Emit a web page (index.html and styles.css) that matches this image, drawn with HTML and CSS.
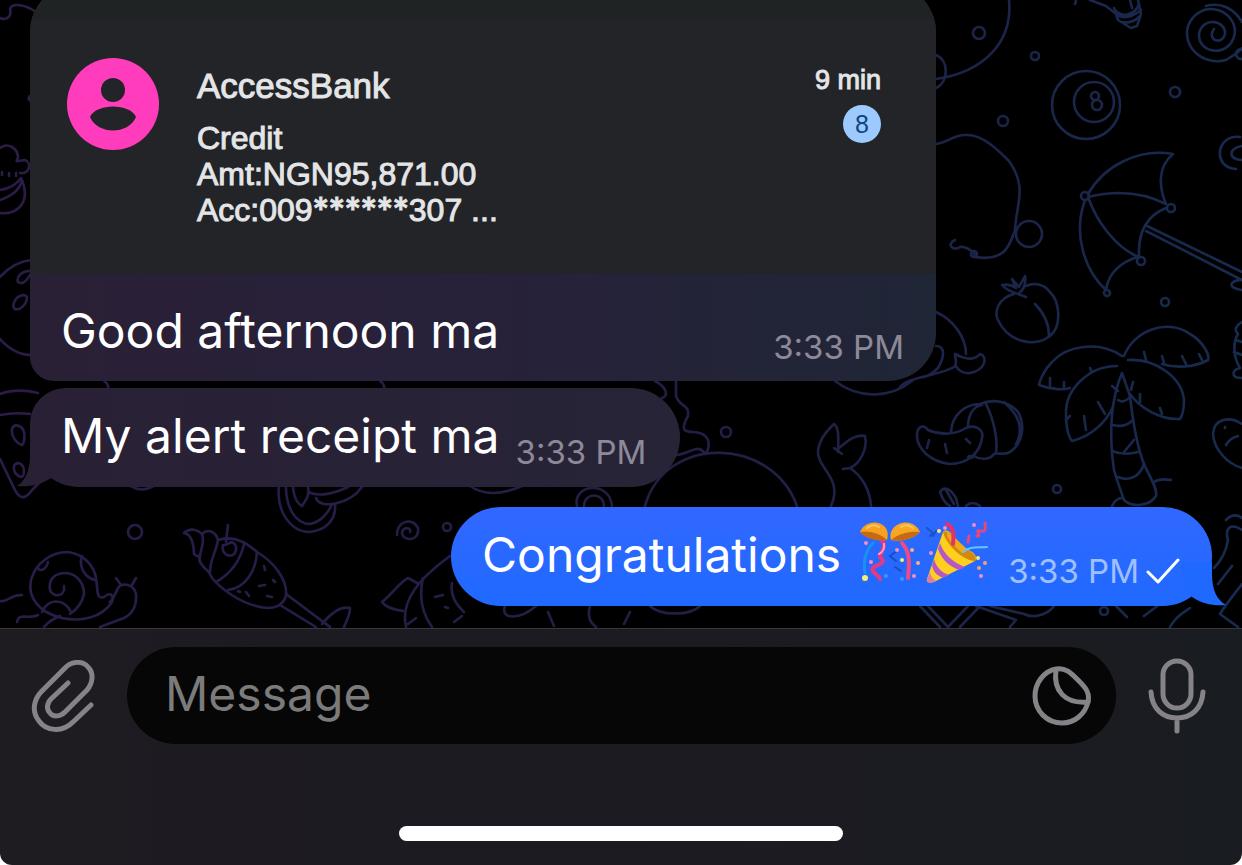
FILE: index.html
```html
<!DOCTYPE html>
<html lang="en">
<head>
  <meta charset="UTF-8">
  <meta name="viewport" content="width=device-width, initial-scale=1.0">
  <title>Chat</title>
  <link rel="stylesheet" href="styles.css">
</head>
<body>
  <main class="chat">
    <svg class="wallpaper" viewBox="0 0 1242 628" preserveAspectRatio="xMidYMax slice" aria-hidden="true">
      <defs>
        <linearGradient id="ink" gradientUnits="userSpaceOnUse" x1="0" y1="400" x2="1242" y2="500">
          <stop offset="0" stop-color="#2b1c49"/>
          <stop offset="0.55" stop-color="#231e46"/>
          <stop offset="0.8" stop-color="#1b2549"/>
          <stop offset="1" stop-color="#172b50"/>
        </linearGradient>
      </defs>
      <g fill="none" stroke="url(#ink)" stroke-width="2.6" stroke-linecap="round" stroke-linejoin="round">
        <!-- left edge -->
        <path d="M0 18C7 21 12 16 10 9C12 2 26 5 36 12"/>
        <path d="M0 148C8 142 18 148 18 158C14 164 20 160 25 160C32 163 30 174 20 173M2 172v3M9 173v3M16 173v3M0 200C12 196 20 190 22 180C30 200 20 215 0 213M0 190Q14 188 21 178"/>
        <path d="M31 95q-5 4 0 6"/>
        <path d="M0 277C10 266 20 261 32 260M32 271C22 270 16 277 18 282C24 286 28 278 32 272M14 303C16 296 24 293 27 297C27 304 20 311 15 309C13 307 13 305 14 303M0 339C10 350 20 355 32 355"/>
        <path d="M0 394C14 389 26 390 38 393M0 415Q14 412 30 414M12 429C14 423 22 425 24 432C25 438 24 444 22 445C16 443 11 436 12 429M14 466C17 461 23 463 24 470C24 475 23 477 21 477C17 476 13 472 14 466M0 459L15 490C20 500 26 499 32 490L40 482"/>
        <path d="M104 381q5 3 4 8M130 486q12 7 24 0M380 381q5 3 4 8M470 486q20 14 52 0"/>
        <!-- snail -->
        <path d="M0 601C8 603 10 594 22 595M17 622C19 612 28 620 38 615"/>
        <path d="M62 618C40 613 27 598 31 580C36 562 52 552 68 552C84 554 94 566 96 578C98 590 96 600 104 597C110 592 114 594 112 602C102 618 80 622 62 618"/>
        <path d="M64 586C66 597 53 598 50 590C48 578 56 573 66 573C78 574 84 584 84 594C82 604 76 610 70 614M42 612C48 598 64 598 71 612M38 568C40 572 46 570 48 562M82 556C78 568 86 578 95 580"/>
        <path d="M110 602C114 598 116 592 118 588C122 582 134 584 136 594C137 606 132 614 124 618L100 627M116 578L121 585M136 578L132 585M44 627Q50 620 60 616"/>
        <circle cx="135" cy="532" r="7"/>
        <!-- sundae cone -->
        <path d="M184 533C190 527 198 530 202 534C208 528 216 532 218 540C236 534 250 546 257 552C274 562 288 580 286 596C282 608 270 610 256 606C240 602 222 590 212 578C206 566 208 574 200 562C198 550 200 560 194 554C194 546 192 534 184 533Z"/>
        <path d="M202 534C206 544 198 552 200 562M218 540C216 552 210 560 210 572M244 544C240 562 230 574 216 582M257 552C256 570 246 588 228 590M228 525L226 542"/>
        <path d="M223 545C220 558 238 560 236 546C232 538 228 546 223 545"/>
        <path d="M264 566l1 4M273 580l2 2M259 586l6-1M246 592l3 4M267 596l5 1M238 591l2 1"/>
        <path d="M286 594L330 627M280 605L316 627M322 624C332 612 342 606 350 608C350 616 346 622 344 627"/>
        <!-- fruit slice -->
        <path d="M279 487C276 510 290 532 310 532C326 530 336 520 335 505M286 487C286 508 296 524 310 524C320 522 328 514 332 504M293 487C294 498 298 504 302 506C306 500 310 494 308 488M308 492C320 498 338 492 348 487M316 498C320 510 350 504 362 487"/>
        <path d="M397 535C396 522 412 516 418 528C420 542 402 542 402 532C404 526 412 528 410 532"/>
        <circle cx="447" cy="527" r="4"/>
        <!-- fish -->
        <path d="M450 556C420 578 400 600 406 627M423 578C418 600 424 616 432 627M419 584L408 578C400 582 392 594 382 602C386 608 396 610 403 611M452 583C450 596 456 604 464 612M435 597l8-2M445 607l3 1M408 624l8-6M454 622l8-6M505 606C500 620 520 620 536 606M548 612l6 14M590 606Q586 620 596 627M630 612l-6 12M650 606C660 616 690 616 700 606"/>
        <!-- around the middle -->
        <path d="M577 506C572 484 610 480 612 506M584 506C584 492 604 492 604 506M655 381C668 388 668 396 662 398M676 381V396C680 408 690 404 688 416C680 430 684 432 694 432C708 433 712 442 706 454M676 455C690 454 696 444 704 452"/>
        <circle cx="726" cy="432" r="5"/>
        <path d="M645 506C665 434 772 436 797 506M835 381C860 400 890 398 912 381"/>
        <path d="M831 506C844 478 816 468 818 450C820 436 830 428 834 424C840 428 838 442 838 452M834 448l8 6M838 449C848 440 856 434 865 436C868 448 860 464 850 468L843 469M850 468C862 476 870 490 871 506"/>
        <!-- top right -->
        <path d="M1009 0C1013 42 984 72 936 79M936 55C949 60 949 82 936 88"/>
        <circle cx="979" cy="33" r="6"/><circle cx="1035" cy="56" r="4"/><circle cx="1003" cy="121" r="5"/><circle cx="1175" cy="92" r="5"/>
        <path d="M1076 1l-1 3M1090 0L1106 6L1116 14L1118 20L1131 28L1137 26L1141 14L1138 0M1114 8Q1116 14 1126 15Q1136 13 1139 4M1116 14Q1126 22 1141 10M1121 22Q1132 24 1139 17M1130 0L1132 8"/>
        <path d="M1214 29C1206 40 1222 46 1225 34C1226 20 1202 16 1199 34C1198 56 1234 58 1235 30C1232 6 1198 0 1188 26C1182 48 1204 66 1226 60C1236 54 1242 50 1242 48M1206 6C1220 2 1234 8 1242 22"/>
        <circle cx="1241" cy="54" r="5"/>
        <circle cx="1086" cy="105" r="34"/><circle cx="1094" cy="102" r="20"/><circle cx="1095" cy="96" r="4"/><circle cx="1097" cy="105" r="5"/>
        <path d="M936 144C950 142 954 134 966 135C982 134 998 150 1009 161C1028 188 1016 204 1015 230C1010 244 1006 262 975 257L974 253Q966 246 960 247C953 252 946 244 955 240"/>
        <circle cx="1029" cy="234" r="13"/><circle cx="974" cy="254" r="3"/>
        <!-- umbrella -->
        <path d="M1088 194C1104 166 1138 148 1173 154C1156 168 1160 190 1166 204C1142 192 1116 190 1088 197C1096 220 1114 246 1138 257C1120 262 1108 274 1106 290C1086 272 1072 236 1085 200M1166 208C1146 216 1138 232 1139 256M1147 226L1242 272M1146 231L1242 280"/>
        <circle cx="1085" cy="196" r="4"/><circle cx="1171" cy="208" r="4"/><circle cx="1141" cy="261" r="4"/><circle cx="1107" cy="293" r="3"/>
        <path d="M1240 137C1216 134 1212 168 1236 169M1242 146C1228 148 1228 160 1242 160M1242 280C1230 280 1226 288 1242 290"/>
        <!-- peach -->
        <path d="M1014 294C998 298 994 312 998 320C1008 342 1034 348 1050 336C1062 326 1060 302 1050 292C1044 284 1034 282 1026 286M1035 304C1045 314 1049 324 1049 336M1018 294C1012 292 1006 290 1002 285C1008 284 1012 285 1016 288L1012 279L1019 287L1025 276C1026 284 1024 290 1018 294L1026 297"/>
        <circle cx="1165" cy="302" r="4"/><circle cx="1057" cy="489" r="4"/>
        <!-- cap -->
        <path d="M936 312C954 320 966 338 966 354M936 346C946 346 944 358 938 368C932 374 928 376 924 377M900 387C910 376 940 376 956 366M955 354C962 358 974 362 980 354C988 356 986 370 970 373C960 374 954 366 956 362L955 354"/>
        <!-- palm -->
        <path d="M1124 356C1134 330 1168 318 1190 334C1204 342 1210 356 1208 360C1194 368 1174 368 1162 364M1122 356C1098 340 1066 346 1052 362C1044 370 1040 380 1039 385C1052 390 1064 390 1070 388M1117 366C1088 366 1066 390 1066 412C1066 426 1068 436 1072 441C1092 436 1106 422 1113 407M1128 360C1156 358 1182 378 1184 400C1184 408 1182 416 1180 419C1160 420 1140 408 1130 394"/>
        <path d="M1122 373C1112 396 1108 430 1114 470C1118 484 1122 494 1124 500C1132 508 1150 506 1156 496C1158 488 1148 474 1144 464C1136 444 1132 414 1130 396Z"/>
        <path d="M1118 400Q1124 404 1131 396M1113 425Q1124 428 1132 421M1112 451Q1124 456 1138 452M1118 477C1130 482 1140 476 1144 464M1124 452L1134 440M1154 482Q1160 478 1171 480M1112 506Q1116 498 1122 498M1050 378v8M1064 382v5M1090 368l2 4M1084 416l2 14M1098 402l7 12M1070 416l-4 4M1112 386l6 5M1133 382l-2 8M1140 394v8M1160 408l2 6M1144 352l2 8M1162 356l2 7M1182 356l4 8M1199 354l3 6"/>
        <!-- shell and bean -->
        <path d="M917 434C918 426 924 424 928 430C942 436 956 434 966 428C976 424 984 430 982 438C980 454 966 464 950 464C930 462 916 448 917 434M951 432C952 414 966 404 980 404C994 398 1010 402 1018 412C1026 426 1022 444 1010 452C1002 456 1000 452 994 454C990 460 980 460 974 456C970 460 966 456 970 456M968 427C968 414 974 406 982 405M986 404C994 420 998 440 996 453M1004 402C1020 416 1024 430 1016 444M929 440l-2 8M945 444l2 9M966 439l4 4"/>
        <path d="M1242 424C1230 416 1214 418 1213 434C1214 450 1228 464 1242 468M1226 445Q1230 438 1238 436M1225 427v1M1242 322Q1232 328 1238 334C1232 344 1234 358 1240 368C1232 370 1230 378 1242 378M1236 340l6 2M1234 352l8 3"/>
        <path d="M940 492C944 486 950 488 956 498L958 506M940 492C942 498 946 504 950 506M946 490L954 504M966 506Q972 500 980 506M1226 520q8-8 16-2"/>
        <!-- under the last bubble -->
        <path d="M920 606L940 627M928 606L948 627L968 606M960 627L980 606M976 606L1016 620L1010 627M990 606L1024 614C1036 620 1050 612 1054 606M1116 606L1127 617M1144 616L1160 604M1170 627C1176 616 1184 612 1190 608M1242 530C1226 520 1226 534 1228 540C1226 552 1220 562 1214 568M1232 566L1218 584M1242 584C1236 592 1226 604 1220 614L1238 627"/>
        <circle cx="1104" cy="611" r="4"/>
      </g>
    </svg>

    <section class="bubble photo-bubble">
      <div class="photo">
        <div class="photo-top"></div>
        <div class="notice">
          <svg class="avatar" viewBox="0 0 94 94" aria-hidden="true">
            <circle cx="47" cy="47" r="46" fill="#ff3dbc"/>
            <circle cx="47" cy="33" r="12" fill="#222428"/>
            <path d="M24 60C30 46 64 46 70 60C62 78 32 78 24 60Z" fill="#222428"/>
          </svg>
          <div class="notice-text">
            <h2>AccessBank</h2>
            <p>Credit<br>Amt:NGN95,871.00<br>Acc:009<span class="stars">******</span>307 ...</p>
          </div>
          <div class="notice-side">
            <span class="ago">9 min</span>
            <span class="count">8</span>
          </div>
        </div>
      </div>
      <div class="line caption">
        <span class="text">Good afternoon ma</span>
        <time class="time">3:33 PM</time>
      </div>
    </section>

    <section class="bubble incoming">
      <svg class="tail tail-left" viewBox="0 0 44 44" aria-hidden="true">
        <path d="M13 0V12C13 28 8 38 0 43C12 44 24 42 34 35L44 20V0Z" fill="#292035"/>
      </svg>
      <div class="line">
        <span class="text">My alert receipt ma</span>
        <time class="time">3:33 PM</time>
      </div>
    </section>

    <section class="bubble outgoing">
      <svg class="tail tail-right" viewBox="0 0 44 44" aria-hidden="true">
        <path d="M30 0V12C30 28 35 38 44 43C32 44 20 42 10 35L0 20V0Z" fill="#1f69ff"/>
      </svg>
      <div class="line">
        <span class="text">Congratulations</span>
        <span class="emojis">
          <svg class="emoji" viewBox="0 0 62 62" role="img" aria-label="confetti ball">
            <path d="M1 11C4 3 14-1 22 3C28 6 30 12 28 19C20 20 8 18 1 11Z" fill="#f7a11f"/>
            <path d="M61 11C58 3 48-1 40 3C33 6 30 13 32 19C42 21 54 18 61 11Z" fill="#f9a723"/>
            <path d="M1 11C8 9 22 12 28 19C20 21 7 18 1 11Z" fill="#c66a12"/>
            <path d="M61 11C52 10 40 12 32 19C42 21 54 18 61 11Z" fill="#c66a12"/>
            <path d="M8 7Q14 2 20 6M42 6Q48 2 54 7" fill="none" stroke="#ffc65c" stroke-width="2" stroke-linecap="round"/>
            <g fill="none" stroke-width="4" stroke-linecap="round">
              <path d="M23 20C30 28 16 34 23 38C28 44 10 44 14 50C16 54 20 54 21 58" stroke="#e23b83"/>
              <path d="M25 23Q26 30 20 33" stroke="#ff9fcb" stroke-width="2"/>
              <path d="M43 22C52 32 50 44 49 57" stroke="#ef4a86"/>
              <path d="M14 22C6 30 4 40 6 52" stroke="#1593f2" stroke-width="3"/>
              <path d="M38 30L31 35L37 40M36 46L42 50" stroke="#164fc2" stroke-width="2"/>
            </g>
            <g fill="#f58cc5"><circle cx="7" cy="22" r="2"/><circle cx="12" cy="41" r="2"/><circle cx="38" cy="29" r="2"/><circle cx="55" cy="55" r="2"/></g>
            <g fill="#f6b083"><circle cx="53" cy="29" r="2"/><circle cx="59" cy="42" r="2"/></g>
            <g fill="#f8ed76"><circle cx="6" cy="57" r="3"/><circle cx="43" cy="39" r="2"/></g>
            <g fill="#329dff"><circle cx="27" cy="55" r="2"/><circle cx="43" cy="58" r="2"/></g>
          </svg>
          <svg class="emoji" viewBox="0 0 62 62" role="img" aria-label="party popper">
            <path d="M17 11L1 58C0 62 4 62 8 61L49 40C52 36 48 31 42 29L30 18C26 12 20 7 17 11Z" fill="#ffce1f"/>
            <path d="M17 11C22 7 30 18 40 28C48 32 51 36 49 40C38 40 20 24 17 11Z" fill="#d58809"/>
            <path d="M21 11C20 18 30 26 36 32L40 28L30 18Z" fill="#f1a81a"/>
            <path d="M14 22C18 34 28 42 39 46L33 49C22 45 15 37 12 28Z" fill="#b458c5"/>
            <path d="M8 38C10 46 16 52 23 54L17 57C10 54 7 50 6 44Z" fill="#b458c5"/>
            <path d="M4 51Q5 57 10 60L5 62Q0 62 1 58Z" fill="#e47c9f"/>
            <g fill="none" stroke-linecap="round">
              <path d="M21 3C28 6 28 14 27 23" stroke="#e82f68" stroke-width="4"/>
              <path d="M37 31C44 25 52 27 61 26" stroke="#63c5ff" stroke-width="2"/>
              <path d="M43 15L42 21M51 15C56 16 48 8 54 10C61 12 59 5 59 2" stroke="#e8477c" stroke-width="3"/>
              <path d="M1 7L7 12L4 15M10 10L7 15" stroke="#1555c5" stroke-width="2"/>
            </g>
            <g fill="#ffe46d"><circle cx="13" cy="10" r="2"/><circle cx="52" cy="37" r="2"/></g>
            <g fill="#f58cc5"><circle cx="19" cy="7" r="2"/><circle cx="5" cy="32" r="2"/><circle cx="48" cy="4" r="2"/><circle cx="55" cy="55" r="2"/></g>
            <g fill="#f4a071"><circle cx="53" cy="47" r="2"/><circle cx="59" cy="42" r="2"/></g>
          </svg>
        </span>
        <time class="time">3:33 PM</time>
        <svg class="check" viewBox="0 0 34 26" role="img" aria-label="sent">
          <path d="M2 14L12 24L32 2" fill="none" stroke="#fff" stroke-width="3" stroke-linecap="round" stroke-linejoin="round"/>
        </svg>
      </div>
    </section>
  </main>

  <footer class="composer">
    <form class="composer-row">
      <button class="icon-button" type="button" aria-label="Attach">
        <svg width="64" height="72" viewBox="0 0 64 72">
          <path d="M60 45L42 62C31 73 15 71 8 61C0 51 3 39 11 31L33 9C41 0 52 1 57 7C63 13 62 23 56 30L34 52C29 57 22 57 19 53C15 49 16 43 20 39L37 23"/>
        </svg>
      </button>
      <div class="field">
        <input type="text" placeholder="Message" aria-label="Message">
        <button class="icon-button" type="button" aria-label="Stickers">
          <svg width="60" height="60" viewBox="0 0 60 60">
            <path d="M24 3C34 1 40 8 47 15C54 22 58 27 56 36C53 48 43 57 30 57C15 57 3 45 3 30C3 17 12 5 24 3Z"/>
            <path d="M24 4C21 25 33 38 56 36"/>
          </svg>
        </button>
      </div>
      <button class="icon-button" type="button" aria-label="Record voice message">
        <svg width="58" height="76" viewBox="0 0 58 76">
          <rect x="15" y="3" width="28" height="47" rx="14"/>
          <path d="M3 34C4 51 15 60 29 60C43 60 54 51 55 34M29 60V73"/>
        </svg>
      </button>
    </form>
    <div class="home-bar"></div>
  </footer>
</body>
</html>
```

FILE: styles.css
```css
* {
  box-sizing: border-box;
}

html {
  background: #fff;
}

body {
  display: flex;
  flex-direction: column;
  height: 100vh;
  margin: 0;
  overflow: hidden;
  font-family: Inter, "Liberation Sans", sans-serif;
  color: #fff;
}

.chat {
  position: relative;
  flex: 1;
  min-height: 0;
  display: flex;
  flex-direction: column;
  justify-content: flex-end;
  align-items: flex-start;
  padding: 0 30px 22px;
  background: #000;
  overflow: hidden;
}

.wallpaper {
  position: absolute;
  inset: 0;
  width: 100%;
  height: 100%;
}

.bubble {
  position: relative;
  flex-shrink: 0;
}

.line {
  display: flex;
  align-items: center;
  padding: 0 32px 0 31px;
}

.text {
  font-size: 48px;
  line-height: 96px;
}

.time {
  margin-left: 16px;
  padding-top: 32px;
  font-size: 33px;
  line-height: 40px;
  color: #8e8998;
}

/* photo message */
.photo-bubble {
  width: 906px;
  max-width: 90%;
  margin-bottom: 7px;
  border-radius: 48px 48px 48px 24px;
  background: linear-gradient(90deg, #2a2036, #27213a 50%, #1f2636);
  overflow: hidden;
}

.photo {
  height: 290px;
  background: #222428;
}

.photo-top {
  height: 36px;
  background: #1f2323;
}

.notice {
  display: flex;
  align-items: flex-start;
  padding: 37px 55px 0 36px;
  font-family: "Liberation Sans", Arial, sans-serif;
}

.avatar {
  width: 94px;
  height: 94px;
}

.notice-text {
  flex: 1;
  margin-left: 37px;
  color: #e4e5e7;
}

.notice-text h2 {
  margin: 9px 0 14px;
  font-size: 35px;
  font-weight: 400;
  line-height: 40px;
}

.notice-text p {
  margin: 0;
  font-size: 32px;
  line-height: 36px;
}

.stars {
  font-family: Inter, sans-serif;
  line-height: 1;
}

.notice-side {
  display: flex;
  flex-direction: column;
  align-items: flex-end;
  gap: 8px;
  padding-top: 6px;
}

.ago {
  font-size: 27px;
  line-height: 34px;
  color: #e4e5e7;
}

.count {
  width: 38px;
  height: 38px;
  border-radius: 50%;
  background: #9ccaff;
  color: #0b4680;
  font-size: 25px;
  line-height: 38px;
  text-align: center;
}

.notice-text,
.ago {
  -webkit-text-stroke: 1px #e4e5e7;
  paint-order: stroke;
}

.caption {
  justify-content: space-between;
  padding-top: 9px;
  padding-bottom: 2px;
}

/* text messages */
.incoming {
  margin-bottom: 20px;
  padding: 0 2px 3px 0;
  border-radius: 36px 50px 50px 50px;
  background: linear-gradient(90deg, #292035, #272438);
}

.outgoing {
  align-self: flex-end;
  padding-bottom: 3px;
  border-radius: 50px;
  background: linear-gradient(#3168ff, #1f69ff);
}

.outgoing .time {
  color: #9fc0ff;
}

.tail {
  position: absolute;
  bottom: 0;
  width: 44px;
  height: 44px;
}

.tail-left {
  left: -13px;
}

.tail-right {
  right: -14px;
}

.emojis {
  display: flex;
  gap: 5px;
  margin: 0 4px 6px 18px;
}

.emoji {
  width: 62px;
  height: 62px;
}

.check {
  width: 34px;
  height: 26px;
  margin: 32px 0 0 7px;
}

/* message box */
.composer {
  display: flex;
  flex-direction: column;
  justify-content: space-between;
  height: 237px;
  padding: 18px 0 24px;
  border-top: 1px solid #39373c;
  border-radius: 0 0 12px 12px;
  background: linear-gradient(90deg, #1e1b21, #1c1b22 50%, #191c20);
}

.composer-row {
  display: flex;
  align-items: center;
  gap: 32px;
  padding: 0 36px 0 31px;
}

.icon-button {
  display: flex;
  padding: 0;
  border: 0;
  background: none;
}

.icon-button svg {
  fill: none;
  stroke: #858388;
  stroke-width: 5;
  stroke-linecap: round;
  stroke-linejoin: round;
}

.field {
  flex: 1;
  display: flex;
  align-items: center;
  height: 97px;
  padding: 0 24px 0 38px;
  border-radius: 49px;
  background: #060606;
}

.field input {
  flex: 1;
  min-width: 0;
  padding: 0 0 4px;
  border: 0;
  outline: 0;
  background: none;
  color: #fff;
  font: inherit;
  font-size: 48px;
}

.field input::placeholder {
  color: #7b7b7b;
  opacity: 1;
}

.home-bar {
  align-self: center;
  width: 444px;
  max-width: 60%;
  height: 15px;
  border-radius: 8px;
  background: #fff;
}
```
